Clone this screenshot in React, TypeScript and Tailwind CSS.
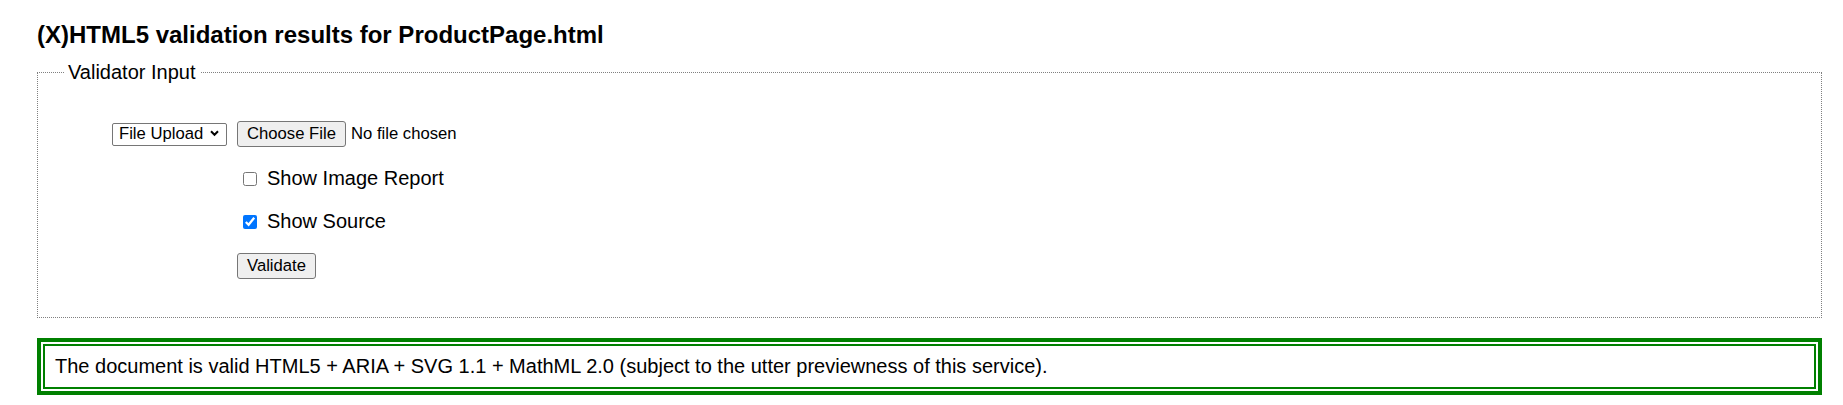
import React from 'react';

const font = { fontFamily: '"Liberation Sans", Arial, sans-serif' };

// 체크박스 한 줄
const CheckRow = ({ label, checked }: { label: string; checked?: boolean }) => (
  <label className="flex items-center h-[23px] leading-[23px] text-[20px] text-black">
    <input
      type="checkbox"
      defaultChecked={checked}
      className="ml-[6px] w-[14px] h-[14px] accent-[#0075ff]"
    />
    <span className="ml-[10px]">{label}</span>
  </label>
);

const GrayButton = ({ children, className = '' }: { children: React.ReactNode; className?: string }) => (
  <button
    type="button"
    className={`h-[26px] border border-[#767676] rounded-[3px] bg-[#efefef] text-[16.67px] leading-[20px] text-black ${className}`}
  >
    {children}
  </button>
);

export default function App() {
  return (
    <div className="min-h-screen bg-white text-black pt-[21px] pl-[37px] pr-[21px]" style={font}>
      <h2 className="text-[24px] leading-[28px] font-bold text-black">
        (X)HTML5 validation results for ProductPage.html
      </h2>

      <fieldset className="mt-[12px] border border-dotted border-[#808080] pl-[26px] pr-[26px] pt-[37px] pb-[38px]">
        <legend className="px-[4px] text-[20px] leading-[23px]">Validator Input</legend>

        <div className="grid grid-cols-[163px_1fr] gap-x-[10px] gap-y-[20px] items-center">
          {/* 입력 방식 선택 */}
          <div className="flex justify-end">
            <div className="relative">
              <select className="appearance-none h-[23px] w-[115px] border border-[#767676] rounded-[2px] bg-white pl-[6px] pr-[22px] text-[16.67px] leading-[20px] text-black">
                <option>File Upload</option>
                <option>Address</option>
                <option>Text Field</option>
              </select>
              <svg
                className="pointer-events-none absolute right-[8px] top-[8px]"
                width="9"
                height="7"
                viewBox="0 0 9 7"
              >
                <path d="M1 1.3 L4.5 4.8 L8 1.3" fill="none" stroke="#000" strokeWidth="2" />
              </svg>
            </div>
          </div>
          <div className="flex items-center">
            <GrayButton className="w-[109px]">Choose File</GrayButton>
            <span className="ml-[5px] text-[16.67px] leading-[20px]">No file chosen</span>
          </div>

          <div />
          <CheckRow label="Show Image Report" />

          <div />
          <CheckRow label="Show Source" checked />

          <div />
          <div>
            <GrayButton className="w-[79px]">Validate</GrayButton>
          </div>
        </div>
      </fieldset>

      <div className="mt-[20px] border-4 border-[#008000] p-[2px]">
        <p className="border-2 border-[#008000] px-[10px] py-[9px] text-[20px] leading-[23px]">
          The document is valid HTML5 + ARIA + SVG 1.1 + MathML 2.0 (subject to the utter previewness of this service).
        </p>
      </div>
    </div>
  );
}
